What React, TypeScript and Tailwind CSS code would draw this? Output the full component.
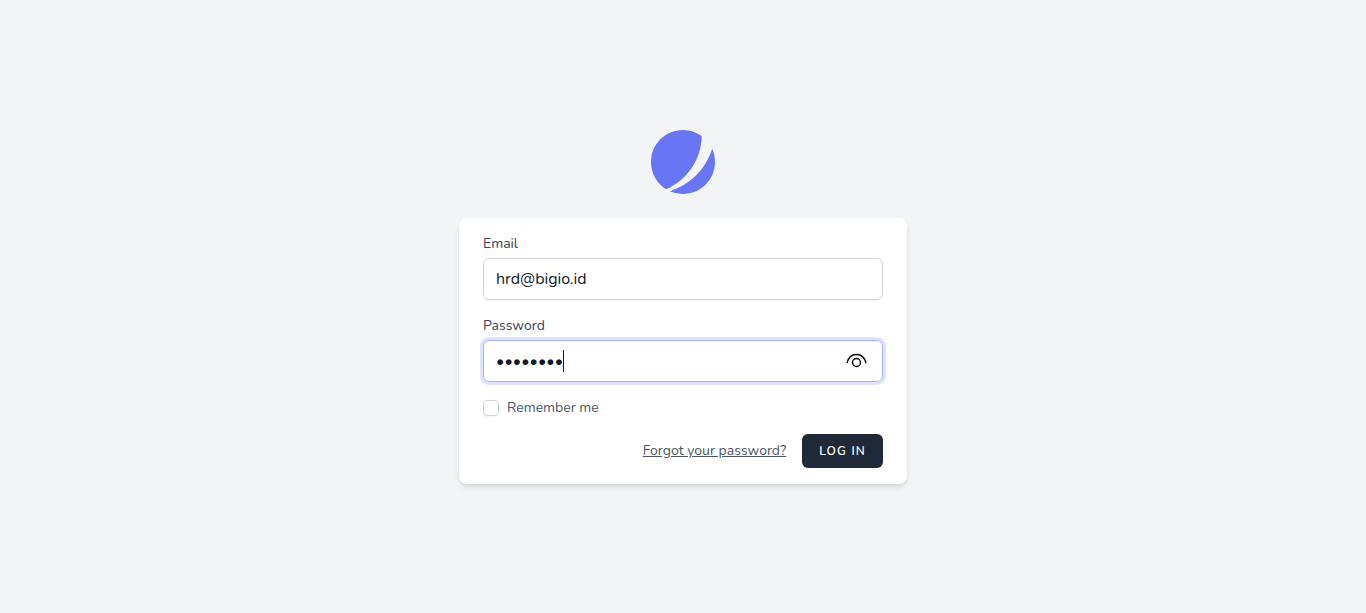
import { useState } from "react";

function Logo() {
  return (
    <svg className="size-16" viewBox="0 0 48 48" fill="none" aria-hidden="true">
      <path
        d="M11.395 44.428C4.557 40.198 0 32.632 0 24 0 10.745 10.745 0 24 0a23.891 23.891 0 0113.997 4.502c-.2 17.907-11.097 33.245-26.602 39.926z"
        fill="#6875F5"
      />
      <path
        d="M14.134 45.885A23.914 23.914 0 0024 48c13.255 0 24-10.745 24-24 0-3.516-.756-6.856-2.115-9.866-4.659 15.143-16.608 27.092-31.75 31.751z"
        fill="#6875F5"
      />
    </svg>
  );
}

function EyeIcon() {
  return (
    <svg className="size-6" viewBox="0 0 24 24" fill="none" stroke="#101010" strokeWidth="1.5" aria-hidden="true">
      <path d="M2 14.2C3.2 8.8 7 5.5 11.5 5.5S19.8 8.8 21 14.2" />
      <circle cx="11.5" cy="13.5" r="4" />
    </svg>
  );
}

export default function App() {
  const [email, setEmail] = useState("hrd@bigio.id");
  const [password, setPassword] = useState("password");
  const [visible, setVisible] = useState(false);

  return (
    <div className="flex min-h-screen flex-col items-center justify-center bg-[#f3f4f6] font-['Nunito','Lato',sans-serif] text-gray-900">
      <a href="/" aria-label="Home">
        <Logo />
      </a>

      <main className="mt-6 w-full max-w-md overflow-hidden rounded-lg bg-white px-6 py-4 shadow-md">
        <form onSubmit={(e) => e.preventDefault()}>
          <label htmlFor="email" className="block text-sm text-[#374151]">
            Email
          </label>
          <input
            id="email"
            type="email"
            value={email}
            onChange={(e) => setEmail(e.target.value)}
            className="mt-1 block h-[42px] w-full rounded-md border border-[#d1d5db] px-3 text-base text-[#111827] shadow-xs outline-none"
          />

          <label htmlFor="password" className="mt-4 block text-sm text-[#374151]">
            Password
          </label>
          <div className="relative mt-1">
            <input
              id="password"
              type={visible ? "text" : "password"}
              value={password}
              onChange={(e) => setPassword(e.target.value)}
              className="block h-[42px] w-full rounded-md border border-[#a4b0fc] pr-12 pl-3 text-base text-[#111827] caret-transparent ring-3 ring-[#e0e3fd] outline-none"
            />
            <span className="absolute top-2.5 left-20 h-[22px] w-px bg-[#111827]" aria-hidden="true" />
            <button
              type="button"
              aria-label="Show password"
              onClick={() => setVisible(!visible)}
              className="absolute inset-y-0 right-3.5 flex items-center"
            >
              <EyeIcon />
            </button>
          </div>

          <label htmlFor="remember" className="mt-4 flex items-center gap-2 text-sm text-[#4b5563]">
            <input
              id="remember"
              type="checkbox"
              className="size-4 appearance-none rounded border border-[#d1d5db] bg-white shadow-xs checked:bg-[#4f46e5]"
            />
            Remember me
          </label>

          <div className="mt-4 flex items-center justify-end gap-4">
            <a href="/forgot-password" className="text-sm text-[#4b5563] underline">
              Forgot your password?
            </a>
            <button
              type="submit"
              className="rounded-md border border-transparent bg-[#1f2937] px-4 py-2 text-xs font-semibold tracking-widest text-white uppercase"
            >
              Log in
            </button>
          </div>
        </form>
      </main>
    </div>
  );
}
